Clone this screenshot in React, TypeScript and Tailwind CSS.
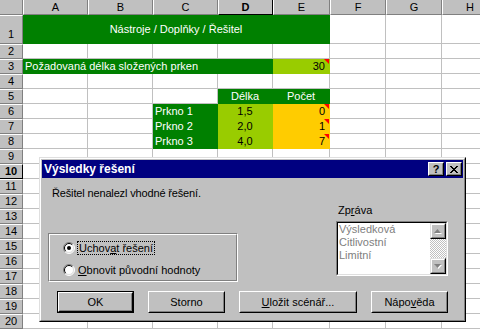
const FONT = "font-['Liberation_Sans',Arial,sans-serif]";

type Fill = "none" | "green" | "lime" | "yellow";
type Align = "left" | "center" | "right";

const fills: Record<Fill, string> = {
  none: "bg-white border-[#c0c0c0]",
  green: "bg-[#008000] border-[#008000] text-white",
  lime: "bg-[#99cc00] border-[#99cc00] text-black",
  yellow: "bg-[#ffcc00] border-[#ffcc00] text-black",
};

const aligns: Record<Align, string> = {
  left: "justify-start pl-[2px]",
  center: "justify-center",
  right: "justify-end pr-[4px]",
};

interface CellDef {
  fill?: Fill;
  span?: 1 | 4 | 5;
  align?: Align;
  text?: string;
  note?: boolean;
}

const spans = { 1: "", 4: "col-span-4", 5: "col-span-5" };

function Note() {
  return (
    <svg className="absolute top-0 right-0" width="5" height="5" viewBox="0 0 5 5">
      <polygon points="0,0 5,0 5,5" fill="#ff0000" />
    </svg>
  );
}

function Cell({ fill = "none", span = 1, align = "left", text, note }: CellDef) {
  return (
    <div
      className={`relative flex items-center overflow-visible whitespace-nowrap border-r border-b text-[11px] ${fills[fill]} ${spans[span]} ${aligns[align]}`}
    >
      {text}
      {note && <Note />}
    </div>
  );
}

const columns = ["A", "B", "C", "D", "E", "F", "G", "H"];

// cells for each row, starting at column A
function rowCells(r: number): CellDef[] {
  const blank = (n: number): CellDef[] => Array.from({ length: n }, () => ({}));
  switch (r) {
    case 1:
      return [{ fill: "green", span: 5, align: "center", text: "Nástroje / Doplňky / Řešitel" }, ...blank(3)];
    case 3:
      return [
        { fill: "green", span: 4, text: "Požadovaná délka složených prken" },
        { fill: "lime", align: "right", text: "30", note: true },
        ...blank(3),
      ];
    case 5:
      return [
        ...blank(3),
        { fill: "green", align: "center", text: "Délka" },
        { fill: "green", align: "center", text: "Počet" },
        ...blank(3),
      ];
    case 6:
    case 7:
    case 8: {
      const d = { 6: ["1,5", "0"], 7: ["2,0", "1"], 8: ["4,0", "7"] }[r]!;
      return [
        ...blank(2),
        { fill: "green", text: `Prkno ${r - 5}` },
        { fill: "lime", align: "center", text: d[0] },
        { fill: "yellow", align: "right", text: d[1], note: true },
        ...blank(3),
      ];
    }
    default:
      return blank(8);
  }
}

function Sheet() {
  const rows = Array.from({ length: 20 }, (_, i) => i + 1);
  return (
    <div className="grid grid-cols-[23px_65px_65px_65px_55px_57px_56px_56px_56px] grid-rows-[15px_29px_repeat(19,15px)]">
      <div className="bg-[#c0c0c0] border-r border-b border-r-[#808080] border-b-[#808080]" />
      {columns.map((c) => (
        <div
          key={c}
          className={
            c === "D"
              ? "flex items-center justify-center bg-[#c0c0c0] border-l border-l-white border-r border-b border-r-black border-b-black text-[11px] font-bold"
              : "flex items-center justify-center bg-[#c0c0c0] border-l border-l-white border-r border-b border-r-[#808080] border-b-[#808080] text-[11px]"
          }
        >
          {c}
        </div>
      ))}
      {rows.map((r) => (
        <div key={r} className="contents">
          <div
            className={
              r === 10
                ? "flex items-center justify-center bg-[#c0c0c0] border-t border-t-white border-r border-b border-r-black border-b-black text-[11px] font-bold"
                : r === 1
                  ? "flex items-end justify-center pb-[1px] bg-[#c0c0c0] border-t border-t-white border-r border-b border-r-[#808080] border-b-[#808080] text-[11px]"
                  : "flex items-center justify-center bg-[#c0c0c0] border-t border-t-white border-r border-b border-r-[#808080] border-b-[#808080] text-[11px]"
            }
          >
            {r}
          </div>
          {rowCells(r).map((c, i) => (
            <Cell key={i} {...c} />
          ))}
        </div>
      ))}
    </div>
  );
}

function Button({ label, isDefault, w }: { label: React.ReactNode; isDefault?: boolean; w: string }) {
  return (
    <div className={`h-[22px] ${w} ${isDefault ? "border border-black" : ""}`}>
      <div className="h-full border border-t-white border-l-white border-r-black border-b-black">
        <div className="flex h-full items-center justify-center border border-transparent border-r-[#808080] border-b-[#808080] text-[11px]">
          {label}
        </div>
      </div>
    </div>
  );
}

function Radio({ checked }: { checked?: boolean }) {
  return (
    <svg width="12" height="12" viewBox="0 0 12 12">
      <circle cx="6" cy="6" r="5" fill="#fff" />
      <path d="M2.1 9.9 A5.5 5.5 0 0 1 9.9 2.1" stroke="#808080" fill="none" />
      <path d="M9.9 2.1 A5.5 5.5 0 0 1 2.1 9.9" stroke="#fff" fill="none" />
      <path d="M2.8 9.2 A4.5 4.5 0 0 1 9.2 2.8" stroke="#000" fill="none" />
      <path d="M9.2 2.8 A4.5 4.5 0 0 1 2.8 9.2" stroke="#dfdfdf" fill="none" />
      {checked && <circle cx="6" cy="6" r="2" fill="#000" />}
    </svg>
  );
}

function ScrollBtn({ up }: { up?: boolean }) {
  return (
    <div className="h-[16px] w-[16px] border border-t-[#dfdfdf] border-l-[#dfdfdf] border-r-black border-b-black bg-[#c0c0c0]">
      <div className="flex h-full items-center justify-center border border-t-white border-l-white border-r-[#808080] border-b-[#808080] border-transparent">
        <svg width="8" height="5" viewBox="0 0 8 5">
          {up ? (
            <>
              <polygon points="4,1 8,5 1,5" fill="#fff" />
              <polygon points="3.5,0 7,4 0,4" fill="#808080" />
            </>
          ) : (
            <>
              <polygon points="1,1 8,1 4.5,5" fill="#fff" />
              <polygon points="0,0 7,0 3.5,4" fill="#808080" />
            </>
          )}
        </svg>
      </div>
    </div>
  );
}

function Dialog() {
  return (
    <div className="absolute left-[39px] top-[157px] h-[165px] w-[427px] border border-t-[#dfdfdf] border-l-[#dfdfdf] border-r-black border-b-black bg-[#c0c0c0]">
      <div className="h-full border border-t-white border-l-white border-r-[#808080] border-b-[#808080] p-[1px]">
        {/* title bar */}
        <div className="flex h-[18px] items-center justify-between bg-[#000080] pl-[2px] pr-[1px]">
          <span className="text-[12px] font-bold text-white">Výsledky řešení</span>
          <div className="flex gap-[2px]">
            <div className="h-[14px] w-[16px] border border-t-white border-l-white border-r-black border-b-black bg-[#c0c0c0]">
              <div className="flex h-full items-center justify-center border border-transparent border-r-[#808080] border-b-[#808080] text-[11px] font-bold leading-none">
                ?
              </div>
            </div>
            <div className="h-[14px] w-[16px] border border-t-white border-l-white border-r-black border-b-black bg-[#c0c0c0]">
              <div className="flex h-full items-center justify-center border border-transparent border-r-[#808080] border-b-[#808080]">
                <svg width="8" height="7" viewBox="0 0 8 7">
                  <path d="M0 0 L7 7 M1 0 L8 7 M7 0 L0 7 M8 0 L1 7" stroke="#000" strokeWidth="1" />
                </svg>
              </div>
            </div>
          </div>
        </div>

        {/* body */}
        <div className="flex">
          <div className="w-[196px] pl-[6px]">
            <p className="pl-[4px] pt-[9px] text-[11px] leading-[13px] tracking-[-0.15px]">Řešitel nenalezl vhodné řešení.</p>
            <div className="mt-[33px] h-[49px] w-[190px] border border-t-[#808080] border-l-[#808080] border-r-white border-b-white">
              <div className="flex h-full flex-col gap-[9px] border border-t-white border-l-white border-r-[#808080] border-b-[#808080] pl-[13px] pt-[6px] text-[11px]">
                <div className="flex items-center gap-[2px]">
                  <Radio checked />
                  <span className="border border-dotted border-black px-[1px] leading-[12px]">
                    Uchov<u>a</u>t řešení
                  </span>
                </div>
                <div className="flex items-center gap-[3px]">
                  <Radio />
                  <span className="leading-[12px]">
                    <u>O</u>bnovit původní hodnoty
                  </span>
                </div>
              </div>
            </div>
          </div>

          <div className="ml-[98px] pt-[26px]">
            <p className="pl-[2px] text-[11px] leading-[13px]">
              Zp<u>r</u>áva
            </p>
            <div className="mt-[4px] h-[55px] w-[112px] border border-t-[#808080] border-l-[#808080] border-r-white border-b-white">
              <div className="flex h-full border border-t-black border-l-black border-r-[#dfdfdf] border-b-[#dfdfdf] bg-white">
                <div className="flex-1 pl-[1px] text-[11px] leading-[13px] text-[#808080]">
                  <div>Výsledková</div>
                  <div>Citlivostní</div>
                  <div>Limitní</div>
                </div>
                <div className="flex w-[16px] flex-col">
                  <ScrollBtn up />
                  <div className="flex-1 bg-[image:repeating-conic-gradient(#c0c0c0_0_25%,#ffffff_0_50%)] bg-size-[2px_2px]" />
                  <ScrollBtn />
                </div>
              </div>
            </div>
          </div>
        </div>

        {/* buttons */}
        <div className="mt-[9px] flex gap-[14px] pl-[15px]">
          <Button label="OK" isDefault w="w-[77px]" />
          <Button label="Storno" w="w-[77px]" />
          <Button
            label={
              <>
                <u>U</u>ložit scénář...
              </>
            }
            w="w-[118px]"
          />
          <Button
            label={
              <>
                Nápo<u>v</u>ěda
              </>
            }
            w="w-[77px]"
          />
        </div>
      </div>
    </div>
  );
}

export default function App() {
  return (
    <div className={`relative h-[330px] w-[480px] overflow-hidden bg-white text-black ${FONT}`}>
      <Sheet />
      <Dialog />
    </div>
  );
}
